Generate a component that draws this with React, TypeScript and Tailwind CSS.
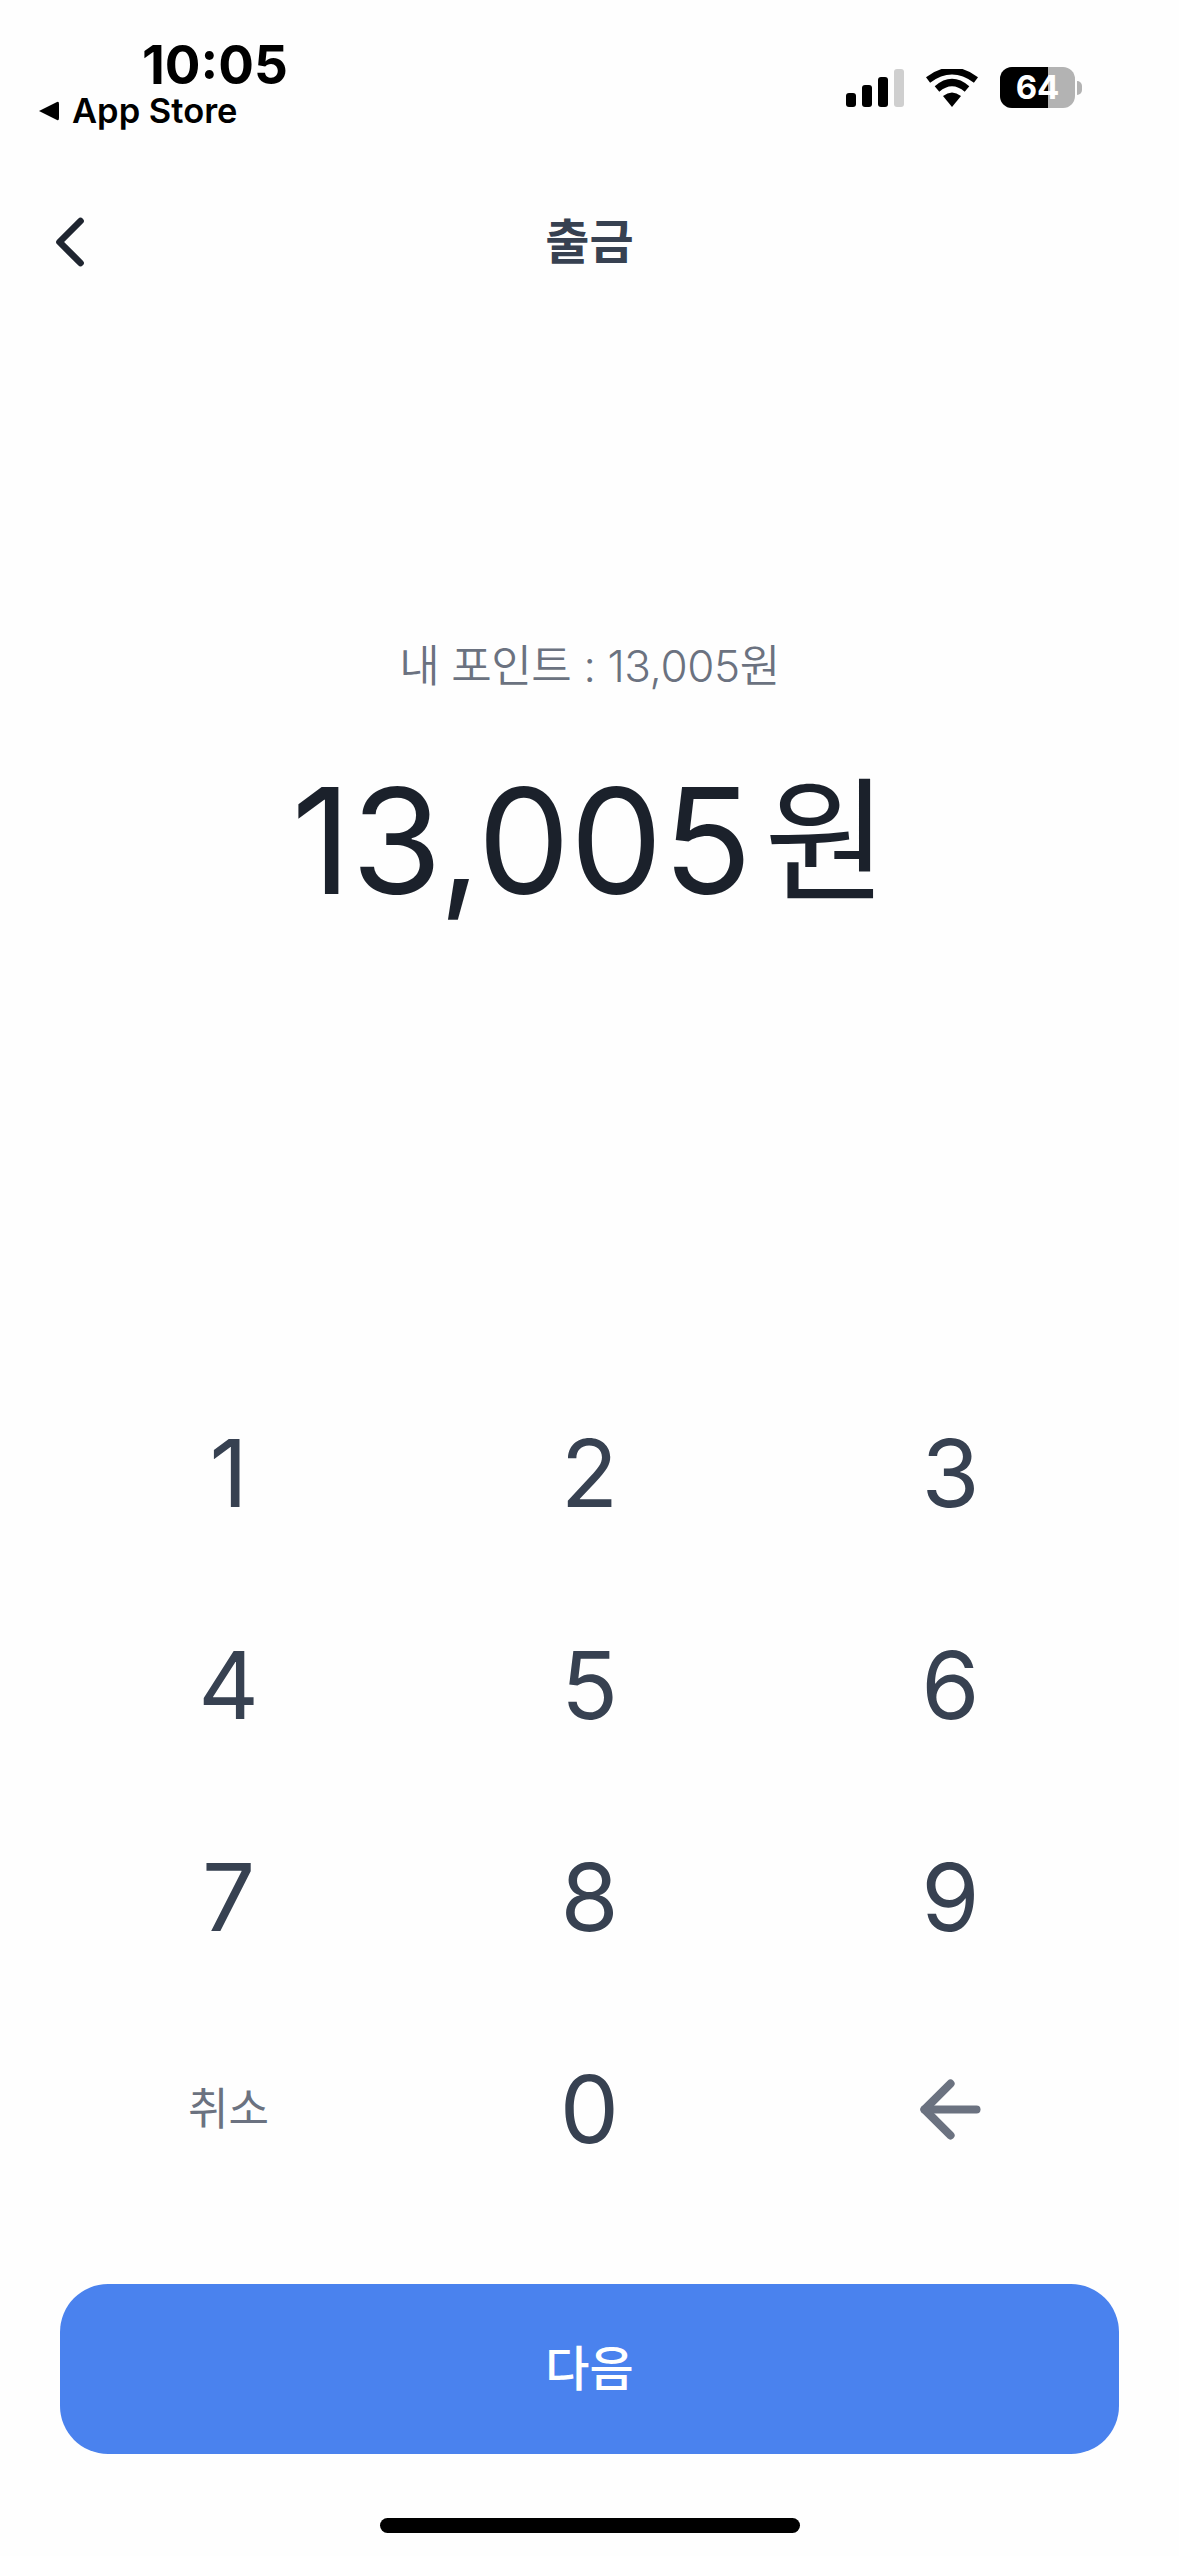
import { ChevronLeft, ArrowLeft } from "lucide-react";

const keys = ["1", "2", "3", "4", "5", "6", "7", "8", "9"];

function StatusIcons() {
  return (
    <div className="flex items-center gap-[22px]">
      <svg width="58" height="38" viewBox="0 0 58 38">
        <rect x="0" y="24" width="10" height="14" rx="3" fill="#000" />
        <rect x="16" y="16" width="10" height="22" rx="3" fill="#000" />
        <rect x="32" y="8" width="10" height="30" rx="3" fill="#000" />
        <rect x="48" y="0" width="10" height="38" rx="3" fill="#cfcfcf" />
      </svg>
      <svg width="52" height="38" viewBox="0 0 52 38">
        <path d="M26 38 L17 27 Q26 20 35 27 Z" fill="#000" />
        <path d="M11 20 Q26 7 41 20" fill="none" stroke="#000" strokeWidth="7" />
        <path d="M2 11 Q26 -7 50 11" fill="none" stroke="#000" strokeWidth="7" />
      </svg>
      <div className="relative flex items-center">
        <div className="relative h-[41px] w-[75px] overflow-hidden rounded-[12px] bg-[#b3b3b3]">
          <div className="h-full w-[48px] bg-black" />
          <span className="absolute inset-0 flex items-center justify-center font-['Inter',sans-serif] text-[33px] font-bold text-white">
            64
          </span>
        </div>
        <div className="ml-[2px] h-[14px] w-[5px] rounded-r-full bg-[#b3b3b3]" />
      </div>
    </div>
  );
}

export default function App() {
  return (
    <div className="flex h-[2556px] w-[1179px] flex-col bg-[#fefefe] font-['Inter','Noto_Sans_CJK_KR',sans-serif]">
      <div className="flex h-[187px] items-start justify-between pl-[38px] pr-[97px] pt-[36px]">
        <div className="flex flex-col">
          <span className="ml-[104px] text-[53px] font-bold leading-[58px] text-black">10:05</span>
          <div className="mt-[-3px] flex items-center gap-[12px]">
            <svg width="22" height="22" viewBox="0 0 22 22">
              <path d="M1 11 L19 2 Q21 1 21 4 V18 Q21 21 19 20 Z" fill="#000" />
            </svg>
            <span className="text-[34.5px] font-semibold leading-[40px] text-black">App Store</span>
          </div>
        </div>
        <div className="mt-[31px]">
          <StatusIcons />
        </div>
      </div>

      <div className="relative flex h-[110px] items-center justify-center">
        <ChevronLeft className="absolute left-[28px] h-[84px] w-[84px] text-[#1f2530]" strokeWidth={1.9} />
        <span className="text-[48px] font-semibold text-[#374151]">출금</span>
      </div>

      <div className="mt-[339px] flex flex-col items-center">
        <span className="text-[44px] font-[350] leading-[60px] tracking-[-0.4px] text-[#6b7280]">내 포인트 : 13,005원</span>
        <div className="mt-[55px] flex items-center gap-[12px] text-[#1b212b]">
          <span className="text-[147px] font-[380] leading-[180px]">13,005</span>
          <span className="text-[134px] font-normal leading-[180px]">원</span>
        </div>
      </div>

      <div className="mt-[436px] grid grid-cols-3 px-[48px]">
        {keys.map((k) => (
          <div key={k} className="flex h-[212px] items-center justify-center text-[94px] font-[380] text-[#374151]">
            {k}
          </div>
        ))}
        <div className="flex h-[212px] items-center justify-center text-[44px] font-normal text-[#6b7280]">취소</div>
        <div className="flex h-[212px] items-center justify-center text-[94px] font-[380] text-[#374151]">0</div>
        <div className="flex h-[212px] items-center justify-center">
          <ArrowLeft className="h-[89px] w-[89px] text-[#6b7280]" strokeWidth={2.2} />
        </div>
      </div>

      <div className="mt-[69px] px-[60px]">
        <button className="flex h-[170px] w-full items-center justify-center rounded-[48px] bg-[#4a82ee] text-[48px] font-medium text-white">
          다음
        </button>
      </div>

      <div className="mt-[64px] flex justify-center">
        <div className="h-[15px] w-[420px] rounded-full bg-black" />
      </div>
    </div>
  );
}
